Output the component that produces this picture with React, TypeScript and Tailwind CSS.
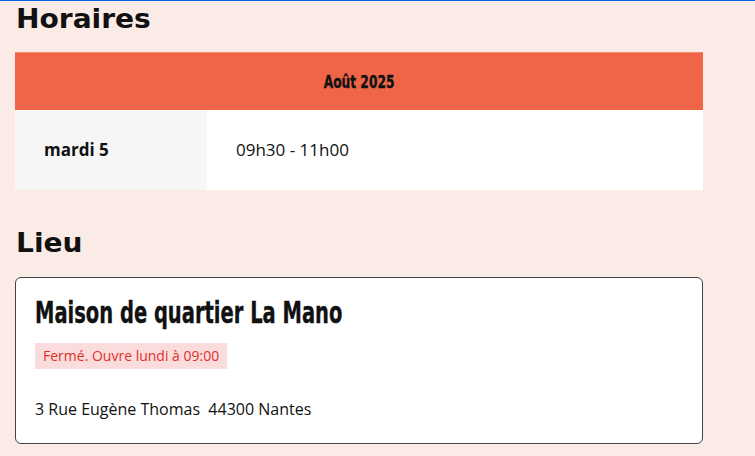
import React from 'react';

const heading = "inline-block origin-left scale-x-[1.08] font-['DejaVu_Sans',sans-serif] font-bold text-[26px] leading-none text-[#111]";
const condensed = "inline-block whitespace-nowrap font-['DejaVu_Sans',sans-serif] font-bold [-webkit-text-stroke:0.4px_#111]";
const body = "font-['Open_Sans','Noto_Sans',sans-serif]";

const App = () => {
  return (
    <div className="min-h-[456px] w-[755px] bg-[#fbebe6] overflow-hidden">
      <div className="h-px bg-[#0a62e0]" />
      <div className="pl-[15px] pr-[52px]">
        {/* Horaires */}
        <h2 className="pl-px pt-[5px] h-[51px]">
          <span className={heading}>Horaires</span>
        </h2>
        <div className="w-[688px]">
          <div className="h-[58px] bg-[#f06548] border-t border-[#f58b74] flex items-center justify-center">
            <span className={`${condensed} scale-x-[0.68] text-[18px] text-[#111]`}>Août 2025</span>
          </div>
          <div className="flex h-[80px]">
            <div className={`${body} w-[192px] bg-[#f6f6f6] flex items-center pl-[29px] font-bold text-[17px] text-[#111]`}>
              mardi 5
            </div>
            <div className={`${body} flex-1 bg-white flex items-center pl-[29px] text-[17px] text-[#111]`}>
              09h30 - 11h00
            </div>
          </div>
        </div>

        {/* Lieu */}
        <h2 className="pl-px mt-[40px] h-[47px]">
          <span className={heading}>Lieu</span>
        </h2>
        <div className="w-[688px] h-[167px] bg-white border border-[#444] rounded-[6px] px-[19px] pt-[16px]">
          <h3 className="h-[38px] leading-[38px]">
            <span className={`${condensed} origin-left scale-x-[0.65] text-[30px] text-[#111]`}>
              Maison de quartier La Mano
            </span>
          </h3>
          <div className={`${body} mt-[11px] inline-block bg-[#fadcdc] px-[8px] h-[26px] leading-[26px] text-[14px] text-[#e0312a]`}>
            Fermé. Ouvre lundi à 09:00
          </div>
          <p className={`${body} mt-[28px] text-[16px] text-[#111]`}>3 Rue Eugène Thomas&nbsp; 44300 Nantes</p>
        </div>
      </div>
    </div>
  );
};

export default App;
